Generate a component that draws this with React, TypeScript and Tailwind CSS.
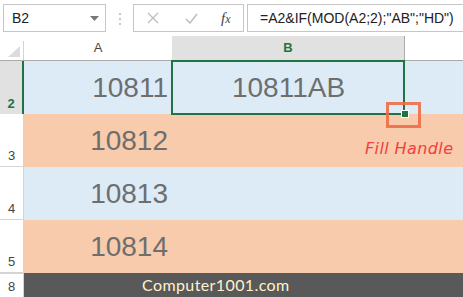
import React from "react";

const rows = [
  { n: "2", a: "10811", b: "10811AB", bg: "bg-[#ddebf7]", active: true },
  { n: "3", a: "10812", b: "", bg: "bg-[#f8cbad]", active: false },
  { n: "4", a: "10813", b: "", bg: "bg-[#ddebf7]", active: false },
  { n: "5", a: "10814", b: "", bg: "bg-[#f8cbad]", active: false },
];

function Toolbar() {
  return (
    <div className="h-[36px] flex items-start pt-[4px] bg-white">
      <div className="ml-[3px] w-[103px] h-[28px] border border-[#c6c6c6] flex items-center justify-between pl-[8px] pr-[6px]">
        <span className="text-[14px] text-[#222]">B2</span>
        <svg width="9" height="5" viewBox="0 0 9 5">
          <path d="M0 0h9L4.5 5z" fill="#777" />
        </svg>
      </div>
      <div className="ml-[13px] mt-[9px] flex flex-col gap-[3px]">
        <span className="w-[2px] h-[2px] bg-[#c8c8c8]" />
        <span className="w-[2px] h-[2px] bg-[#c8c8c8]" />
        <span className="w-[2px] h-[2px] bg-[#c8c8c8]" />
      </div>
      <div className="ml-[12px] w-[111px] h-[28px] border border-[#c6c6c6] flex items-center pl-[13px]">
        <svg width="12" height="12" viewBox="0 0 12 12">
          <path d="M1 1l10 10M11 1L1 11" stroke="#bdbdbd" strokeWidth="1.3" />
        </svg>
        <svg className="ml-[26px]" width="13" height="11" viewBox="0 0 13 11">
          <path d="M1 6l4 4 7-9" stroke="#bdbdbd" strokeWidth="1.5" fill="none" />
        </svg>
        <span className="ml-[23px] text-[15px] italic text-[#444] font-['Liberation_Serif',serif]">
          f<span className="text-[12px]">x</span>
        </span>
      </div>
      <div className="ml-[3px] flex-1 h-[28px] border border-r-0 border-[#c6c6c6] flex items-center pl-[12px]">
        <span className="text-[14px] text-[#222]">=A2&amp;IF(MOD(A2;2);"AB";"HD")</span>
      </div>
    </div>
  );
}

function HeaderRow() {
  return (
    <div className="flex h-[25px] border-b border-[#ababab] bg-white">
      <div className="w-[24px] border-r border-[#d4d4d4] flex items-end justify-end pr-[3px] pb-[3px] mt-[5px]">
        <svg width="12" height="11" viewBox="0 0 12 11">
          <path d="M12 0v11H0z" fill="#dcdcdc" />
        </svg>
      </div>
      <div className="w-[148px] flex items-center justify-center text-[13px] text-[#444]">A</div>
      <div className="w-[233px] bg-[#e1e1e1] border-r border-[#ababab] flex items-center justify-center text-[13px] font-bold text-[#217346]">
        B
      </div>
      <div className="flex-1" />
    </div>
  );
}

export default function App() {
  return (
    <div className="w-[463px] h-[297px] bg-white overflow-hidden relative font-['Liberation_Sans',sans-serif]">
      <Toolbar />
      <HeaderRow />
      {rows.map((r) => (
        <div key={r.n} className="flex h-[53px]">
          <div
            className={
              r.active
                ? "w-[24px] bg-[#e1e1e1] border-r-2 border-[#217346] flex items-end justify-center pb-[1px] text-[13px] font-bold text-[#217346]"
                : "w-[24px] bg-white border-r border-b border-[#d4d4d4] flex items-end justify-center pb-[1px] text-[13px] text-[#444]"
            }
          >
            {r.n}
          </div>
          <div className={`flex flex-1 ${r.bg}`}>
            <div className="w-[148px] flex items-center justify-end pr-[4px] text-[28px] text-[#6e6e6e]">
              {r.a}
            </div>
            <div className="w-[233px] flex items-center justify-center text-[28px] text-[#6e6e6e]">
              {r.b}
            </div>
          </div>
        </div>
      ))}
      <div className="flex h-[24px]">
        <div className="w-[24px] bg-white border-r border-t border-[#d4d4d4] flex items-end justify-center pb-[1px] text-[13px] text-[#444]">
          8
        </div>
        <div className="flex-1 bg-[#595959] flex items-center pl-[118px]">
          <span className="text-[16px] text-[#fff2cc] font-['Lato',sans-serif] tracking-[0.4px]">
            Computer1001.com
          </span>
        </div>
      </div>

      {/* selection, fill handle and annotation */}
      <div className="absolute left-[171px] top-[60px] w-[234px] h-[55px] border-2 border-[#217346]" />
      <div className="absolute left-[401px] top-[110px] w-[8px] h-[8px] border border-white bg-[#217346]" />
      <div className="absolute left-[386px] top-[102px] w-[35px] h-[26px] border-[3px] border-[#ed6d45]/90" />
      <div className="absolute left-[365px] top-[137px] text-[16px] italic tracking-[0.4px] text-[#f0413c] font-['DejaVu_Sans',sans-serif]">
        Fill Handle
      </div>
    </div>
  );
}
